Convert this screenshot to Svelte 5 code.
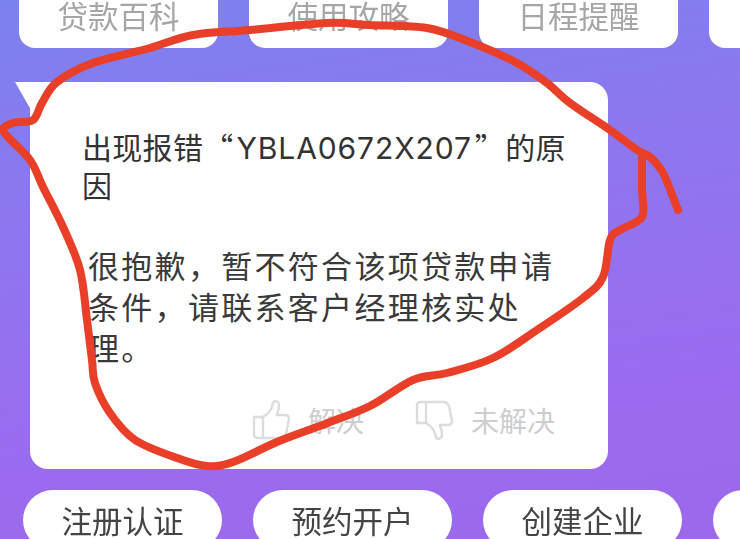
<script>
  const topItems = ['贷款百科', '使用攻略', '日程提醒', ''];
  const bottomItems = ['注册认证', '预约开户', '创建企业', ''];

  // the red pen circle drawn over the screenshot
  const pen = [
    [678,210],[663,173],[650,157],[637,150],[610,130],[570,103],[547,83],[517,63],[470,42],[427,28],[370,25],
    [327,23],[250,30],[193,35],[150,48],[93,63],[57,82],[42,103],[33,120],[13,123],[4,132],[30,160],[43,187],
    [63,227],[80,270],[87,320],[92,360],[95,383],[110,413],[135,440],[177,458],[207,466],[233,462],[277,442],[325,424],
    [370,406],[413,380],[447,373],[493,358],[537,330],[583,298],[603,277],[610,240],[620,230],[642,217],[642,190],[642,158]
  ];

  function smooth(pts) {
    let d = `M${pts[0][0]} ${pts[0][1]}`;
    for (let i = 0; i < pts.length - 1; i++) {
      const a = pts[i - 1] || pts[i];
      const b = pts[i];
      const c = pts[i + 1];
      const e = pts[i + 2] || c;
      const c1 = [b[0] + (c[0] - a[0]) / 6, b[1] + (c[1] - a[1]) / 6];
      const c2 = [c[0] - (e[0] - b[0]) / 6, c[1] - (e[1] - b[1]) / 6];
      d += `C${c1[0]} ${c1[1]} ${c2[0]} ${c2[1]} ${c[0]} ${c[1]}`;
    }
    return d;
  }

  const penPath = smooth(pen);
</script>

<div class="page">
  <div class="soft">
    <div class="row top">
      {#each topItems as item}
        <div class="pill">{item}</div>
      {/each}
    </div>

    <div class="card">
      <div class="tail"></div>
      <h3>出现报错“<span class="code">YBLA0672X207</span>”的原因</h3>
      <p>很抱歉，暂不符合该项贷款申请条件，请联系客户经理核实处理。</p>
      <div class="feedback">
        <span class="vote">
          <svg class="thumb" viewBox="0 0 38 40">
            <path d="M2 17h9v21H5a3 3 0 0 1-3-3z" />
            <path d="M11 17c5-3 9-8 10-14 1-3 6-2 6 2 0 4-1 7-2 10h8c3 0 4 2 4 4l-3 15c-1 2-2 4-5 4H11" />
          </svg>
          解决
        </span>
        <span class="vote">
          <svg class="thumb down" viewBox="0 0 38 40">
            <path d="M2 17h9v21H5a3 3 0 0 1-3-3z" />
            <path d="M11 17c5-3 9-8 10-14 1-3 6-2 6 2 0 4-1 7-2 10h8c3 0 4 2 4 4l-3 15c-1 2-2 4-5 4H11" />
          </svg>
          未解决
        </span>
      </div>
    </div>

    <div class="row bottom">
      {#each bottomItems as item}
        <div class="pill">{item}</div>
      {/each}
    </div>
  </div>

  <svg class="pen" viewBox="0 0 740 539">
    <path d={penPath} />
  </svg>
</div>

<style>
  :global(body) {
    margin: 0;
  }

  .page {
    position: relative;
    width: 740px;
    height: 539px;
    overflow: hidden;
    background: linear-gradient(172deg, #7c82ee 0%, #8b78ef 30%, #9a6cef 70%, #9c68ec 100%);
    font-family: "Noto Sans CJK SC", "Liberation Sans", sans-serif;
  }

  .soft {
    filter: blur(0.5px);
  }

  .row {
    display: flex;
    white-space: nowrap;
    overflow: hidden;
  }

  .pill {
    flex: 0 0 199px;
    box-sizing: border-box;
    background: #fff;
    font-size: 30.5px;
    line-height: 31px;
    text-align: center;
  }

  .top {
    height: 48px;
    padding-left: 19px;
    gap: 31px;
  }

  .top .pill {
    height: 48px;
    padding-top: 0;
    border-radius: 0 0 16px 16px;
    color: #a6a6a6;
  }

  .bottom {
    height: 49px;
    margin-top: 21px;
    padding-left: 23px;
    gap: 31px;
  }

  .bottom .pill {
    height: 60px;
    padding-top: 15px;
    border-radius: 30px;
    color: #444;
  }

  .card {
    position: relative;
    box-sizing: border-box;
    width: 578px;
    height: 387px;
    margin: 34px 0 0 30px;
    padding: 46px 36px 29px 52px;
    background: #fff;
    border-radius: 0 18px 18px 18px;
    display: flex;
    flex-direction: column;
    color: #333;
  }

  .tail {
    position: absolute;
    left: -15px;
    top: 0;
    width: 16px;
    height: 28px;
    background: #fff;
    clip-path: polygon(0 0, 100% 0, 100% 100%);
  }

  h3 {
    margin: 0;
    width: 495px;
    font-size: 30px;
    font-weight: 400;
    letter-spacing: 0.3px;
    line-height: 36px;
    color: #333;
  }

  .code {
    font-family: Inter, "Liberation Sans", sans-serif;
    letter-spacing: 0.9px;
    margin: 0 3px;
  }

  p {
    margin: 42px 0 0 6px;
    width: 480px;
    font-size: 31px;
    letter-spacing: 2.3px;
    line-height: 41px;
    color: #3a3a3a;
  }

  .feedback {
    margin-top: auto;
    display: flex;
    justify-content: flex-end;
    gap: 51px;
    padding-right: 17px;
    font-size: 28px;
    line-height: 36px;
    color: #cdcdcd;
  }

  .vote {
    display: flex;
    align-items: center;
    gap: 18px;
  }

  .thumb {
    width: 38px;
    height: 40px;
    fill: none;
    stroke: #dcdcdc;
    stroke-width: 2.4;
  }

  .thumb.down {
    transform: scaleY(-1);
  }

  .pen {
    position: absolute;
    inset: 0;
    width: 740px;
    height: 539px;
    pointer-events: none;
  }

  .pen path {
    fill: none;
    stroke: #e93f28;
    stroke-width: 8;
    stroke-linecap: round;
    stroke-linejoin: round;
  }
</style>
